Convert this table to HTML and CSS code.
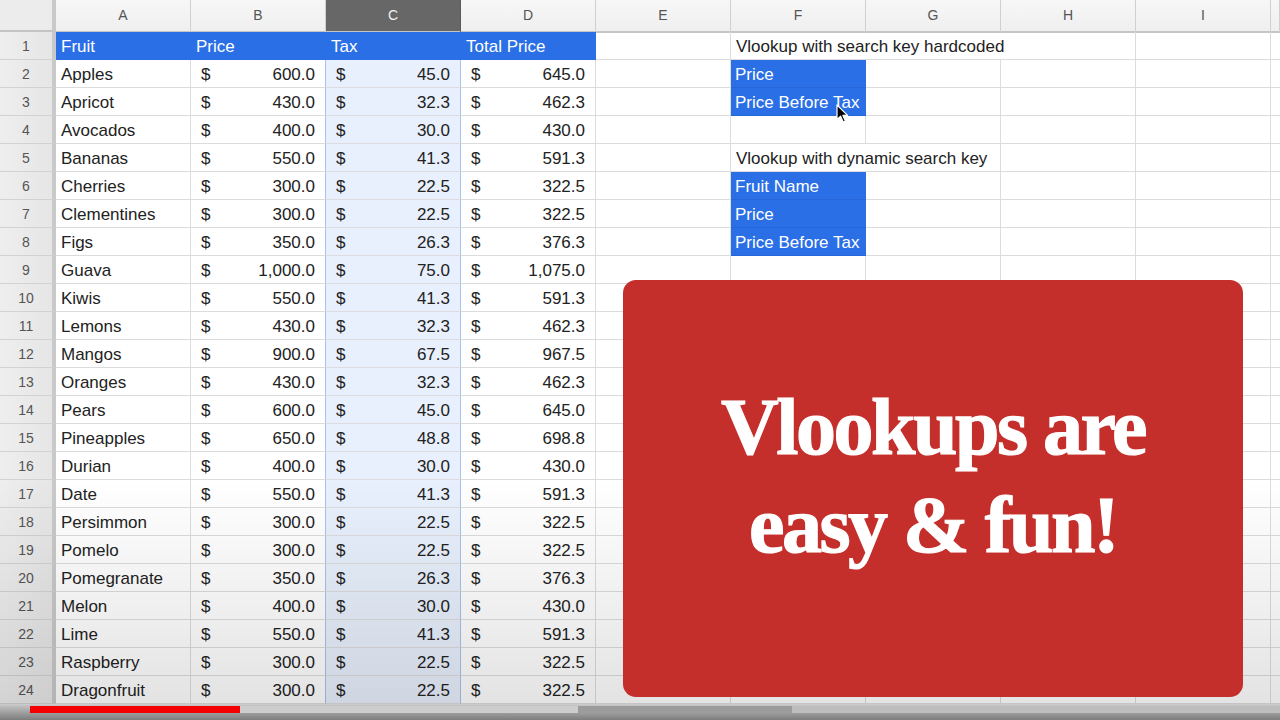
FILE: index.html
```html
<!DOCTYPE html>
<html>
<head>
<meta charset="utf-8">
<link rel="stylesheet" href="styles.css">
</head>
<body>
<div class="screen">
  <div class="sheet">
    <div class="row hdr">
      <div class="corner"></div>
      <div class="ch">A</div><div class="ch">B</div><div class="ch sel">C</div><div class="ch">D</div><div class="ch">E</div><div class="ch">F</div><div class="ch">G</div><div class="ch">H</div><div class="ch">I</div><div class="ch"></div>
    </div>
    <div class="row">
      <div class="rn">1</div>
      <div class="c blue">Fruit</div><div class="c blue">Price</div><div class="c blue">Tax</div><div class="c blue">Total Price</div>
      <div class="c"></div><div class="c span3">Vlookup with search key hardcoded</div><div class="c"></div><div class="c"></div>
    </div>
    <div class="row">
      <div class="rn">2</div><div class="c">Apples</div><div class="c m"><span>$</span><span>600.0</span></div><div class="c m tx"><span>$</span><span>45.0</span></div><div class="c m"><span>$</span><span>645.0</span></div>
      <div class="c"></div><div class="c fb">Price</div><div class="c"></div><div class="c"></div><div class="c"></div><div class="c"></div>
    </div>
    <div class="row">
      <div class="rn">3</div><div class="c">Apricot</div><div class="c m"><span>$</span><span>430.0</span></div><div class="c m tx"><span>$</span><span>32.3</span></div><div class="c m"><span>$</span><span>462.3</span></div>
      <div class="c"></div><div class="c fb">Price Before Tax</div><div class="c"></div><div class="c"></div><div class="c"></div><div class="c"></div>
    </div>
    <div class="row">
      <div class="rn">4</div><div class="c">Avocados</div><div class="c m"><span>$</span><span>400.0</span></div><div class="c m tx"><span>$</span><span>30.0</span></div><div class="c m"><span>$</span><span>430.0</span></div>
      <div class="c"></div><div class="c"></div><div class="c"></div><div class="c"></div><div class="c"></div><div class="c"></div>
    </div>
    <div class="row">
      <div class="rn">5</div><div class="c">Bananas</div><div class="c m"><span>$</span><span>550.0</span></div><div class="c m tx"><span>$</span><span>41.3</span></div><div class="c m"><span>$</span><span>591.3</span></div>
      <div class="c"></div><div class="c span2">Vlookup with dynamic search key</div><div class="c"></div><div class="c"></div><div class="c"></div>
    </div>
    <div class="row">
      <div class="rn">6</div><div class="c">Cherries</div><div class="c m"><span>$</span><span>300.0</span></div><div class="c m tx"><span>$</span><span>22.5</span></div><div class="c m"><span>$</span><span>322.5</span></div>
      <div class="c"></div><div class="c fb">Fruit Name</div><div class="c"></div><div class="c"></div><div class="c"></div><div class="c"></div>
    </div>
    <div class="row">
      <div class="rn">7</div><div class="c">Clementines</div><div class="c m"><span>$</span><span>300.0</span></div><div class="c m tx"><span>$</span><span>22.5</span></div><div class="c m"><span>$</span><span>322.5</span></div>
      <div class="c"></div><div class="c fb">Price</div><div class="c"></div><div class="c"></div><div class="c"></div><div class="c"></div>
    </div>
    <div class="row">
      <div class="rn">8</div><div class="c">Figs</div><div class="c m"><span>$</span><span>350.0</span></div><div class="c m tx"><span>$</span><span>26.3</span></div><div class="c m"><span>$</span><span>376.3</span></div>
      <div class="c"></div><div class="c fb">Price Before Tax</div><div class="c"></div><div class="c"></div><div class="c"></div><div class="c"></div>
    </div>
    <div class="row">
      <div class="rn">9</div><div class="c">Guava</div><div class="c m"><span>$</span><span>1,000.0</span></div><div class="c m tx"><span>$</span><span>75.0</span></div><div class="c m"><span>$</span><span>1,075.0</span></div>
      <div class="c"></div><div class="c"></div><div class="c"></div><div class="c"></div><div class="c"></div><div class="c"></div>
    </div>
    <div class="row">
      <div class="rn">10</div><div class="c">Kiwis</div><div class="c m"><span>$</span><span>550.0</span></div><div class="c m tx"><span>$</span><span>41.3</span></div><div class="c m"><span>$</span><span>591.3</span></div>
      <div class="c"></div><div class="c"></div><div class="c"></div><div class="c"></div><div class="c"></div><div class="c"></div>
    </div>
    <div class="row">
      <div class="rn">11</div><div class="c">Lemons</div><div class="c m"><span>$</span><span>430.0</span></div><div class="c m tx"><span>$</span><span>32.3</span></div><div class="c m"><span>$</span><span>462.3</span></div>
      <div class="c"></div><div class="c"></div><div class="c"></div><div class="c"></div><div class="c"></div><div class="c"></div>
    </div>
    <div class="row">
      <div class="rn">12</div><div class="c">Mangos</div><div class="c m"><span>$</span><span>900.0</span></div><div class="c m tx"><span>$</span><span>67.5</span></div><div class="c m"><span>$</span><span>967.5</span></div>
      <div class="c"></div><div class="c"></div><div class="c"></div><div class="c"></div><div class="c"></div><div class="c"></div>
    </div>
    <div class="row">
      <div class="rn">13</div><div class="c">Oranges</div><div class="c m"><span>$</span><span>430.0</span></div><div class="c m tx"><span>$</span><span>32.3</span></div><div class="c m"><span>$</span><span>462.3</span></div>
      <div class="c"></div><div class="c"></div><div class="c"></div><div class="c"></div><div class="c"></div><div class="c"></div>
    </div>
    <div class="row">
      <div class="rn">14</div><div class="c">Pears</div><div class="c m"><span>$</span><span>600.0</span></div><div class="c m tx"><span>$</span><span>45.0</span></div><div class="c m"><span>$</span><span>645.0</span></div>
      <div class="c"></div><div class="c"></div><div class="c"></div><div class="c"></div><div class="c"></div><div class="c"></div>
    </div>
    <div class="row">
      <div class="rn">15</div><div class="c">Pineapples</div><div class="c m"><span>$</span><span>650.0</span></div><div class="c m tx"><span>$</span><span>48.8</span></div><div class="c m"><span>$</span><span>698.8</span></div>
      <div class="c"></div><div class="c"></div><div class="c"></div><div class="c"></div><div class="c"></div><div class="c"></div>
    </div>
    <div class="row">
      <div class="rn">16</div><div class="c">Durian</div><div class="c m"><span>$</span><span>400.0</span></div><div class="c m tx"><span>$</span><span>30.0</span></div><div class="c m"><span>$</span><span>430.0</span></div>
      <div class="c"></div><div class="c"></div><div class="c"></div><div class="c"></div><div class="c"></div><div class="c"></div>
    </div>
    <div class="row">
      <div class="rn">17</div><div class="c">Date</div><div class="c m"><span>$</span><span>550.0</span></div><div class="c m tx"><span>$</span><span>41.3</span></div><div class="c m"><span>$</span><span>591.3</span></div>
      <div class="c"></div><div class="c"></div><div class="c"></div><div class="c"></div><div class="c"></div><div class="c"></div>
    </div>
    <div class="row">
      <div class="rn">18</div><div class="c">Persimmon</div><div class="c m"><span>$</span><span>300.0</span></div><div class="c m tx"><span>$</span><span>22.5</span></div><div class="c m"><span>$</span><span>322.5</span></div>
      <div class="c"></div><div class="c"></div><div class="c"></div><div class="c"></div><div class="c"></div><div class="c"></div>
    </div>
    <div class="row">
      <div class="rn">19</div><div class="c">Pomelo</div><div class="c m"><span>$</span><span>300.0</span></div><div class="c m tx"><span>$</span><span>22.5</span></div><div class="c m"><span>$</span><span>322.5</span></div>
      <div class="c"></div><div class="c"></div><div class="c"></div><div class="c"></div><div class="c"></div><div class="c"></div>
    </div>
    <div class="row">
      <div class="rn">20</div><div class="c">Pomegranate</div><div class="c m"><span>$</span><span>350.0</span></div><div class="c m tx"><span>$</span><span>26.3</span></div><div class="c m"><span>$</span><span>376.3</span></div>
      <div class="c"></div><div class="c"></div><div class="c"></div><div class="c"></div><div class="c"></div><div class="c"></div>
    </div>
    <div class="row">
      <div class="rn">21</div><div class="c">Melon</div><div class="c m"><span>$</span><span>400.0</span></div><div class="c m tx"><span>$</span><span>30.0</span></div><div class="c m"><span>$</span><span>430.0</span></div>
      <div class="c"></div><div class="c"></div><div class="c"></div><div class="c"></div><div class="c"></div><div class="c"></div>
    </div>
    <div class="row">
      <div class="rn">22</div><div class="c">Lime</div><div class="c m"><span>$</span><span>550.0</span></div><div class="c m tx"><span>$</span><span>41.3</span></div><div class="c m"><span>$</span><span>591.3</span></div>
      <div class="c"></div><div class="c"></div><div class="c"></div><div class="c"></div><div class="c"></div><div class="c"></div>
    </div>
    <div class="row">
      <div class="rn">23</div><div class="c">Raspberry</div><div class="c m"><span>$</span><span>300.0</span></div><div class="c m tx"><span>$</span><span>22.5</span></div><div class="c m"><span>$</span><span>322.5</span></div>
      <div class="c"></div><div class="c"></div><div class="c"></div><div class="c"></div><div class="c"></div><div class="c"></div>
    </div>
    <div class="row">
      <div class="rn">24</div><div class="c">Dragonfruit</div><div class="c m"><span>$</span><span>300.0</span></div><div class="c m tx"><span>$</span><span>22.5</span></div><div class="c m"><span>$</span><span>322.5</span></div>
      <div class="c"></div><div class="c"></div><div class="c"></div><div class="c"></div><div class="c"></div><div class="c"></div>
    </div>
  </div>

  <div class="player">
    <div class="progress">
      <div class="played"></div>
      <div class="buffered"></div>
      <div class="track-dark"></div>
      <div class="track-light"></div>
    </div>
  </div>

  <div class="shade"></div>

  <div class="card">
    <div class="headline">Vlookups are<br>easy &amp; fun!</div>
  </div>

  <svg class="cursor" width="13" height="20" viewBox="0 0 13 20">
    <path d="M1 1 L1 15.5 L4.6 12.2 L7.2 18 L9.4 17 L6.9 11.4 L11.6 11.4 Z" fill="#000" stroke="#fff" stroke-width="1.2" stroke-linejoin="round"/>
  </svg>
</div>
</body>
</html>
```

FILE: styles.css
```css
* { box-sizing: border-box; }

html, body {
  margin: 0;
  padding: 0;
}

body {
  width: 1280px;
  height: 720px;
  overflow: hidden;
  background: #ffffff;
  font-family: "Liberation Sans", Arial, Helvetica, sans-serif;
}

.screen {
  position: relative;
  width: 1280px;
  height: 720px;
  overflow: hidden;
}

.sheet {
  display: flex;
  flex-direction: column;
  height: 704px;
}

.row {
  display: grid;
  grid-template-columns: 56px repeat(9, 135px) 1fr;
  height: 28px;
}

.row.hdr {
  height: 32px;
}

.corner {
  background: #ececec;
  border-right: 4px solid #c9c9c9;
  border-bottom: 3px solid #c4c4c4;
}

.ch {
  background: linear-gradient(#f7f7f7, #efefef);
  border-right: 1px solid #d0d0d0;
  border-bottom: 2px solid #c4c4c4;
  color: #555;
  font-size: 14px;
  line-height: 31px;
  text-align: center;
}

.ch.sel {
  background: #676767;
  color: #f2f2f2;
  border-right-color: #5a5a5a;
}

.rn {
  background: linear-gradient(90deg, #eeeeee, #e6e6e6);
  border-right: 4px solid #c9c9c9;
  border-bottom: 1px solid #d2d2d2;
  color: #555;
  font-size: 14px;
  padding-top: 2px;
  line-height: 25px;
  text-align: center;
}

.c {
  border-right: 1px solid #dcdcdc;
  border-bottom: 1px solid #dcdcdc;
  color: #222;
  font-size: 17px;
  padding: 2px 5px 0;
  line-height: 25px;
  white-space: nowrap;
  overflow: visible;
}

.c.span3 { grid-column: span 3; }
.c.span2 { grid-column: span 2; }

.c.m {
  display: flex;
  justify-content: space-between;
  padding: 2px 10px 0;
}

.c.tx {
  background: #e8f0fd;
  border-left: 1px solid #a9c1ea;
  border-right: 1px solid #a9c1ea;
  margin-left: -1px;
}

.c.blue {
  background: #2a6fe6;
  color: #ffffff;
  border-right-color: #2a6fe6;
  border-bottom-color: #2a6fe6;
}

.c.fb {
  background: #2a6fe6;
  color: #ffffff;
  border-right-color: #2a6fe6;
  border-bottom-color: #2966da;
  padding-left: 4px;
}

.player {
  height: 16px;
  background: linear-gradient(#cfcfcf 0, #c2c2c2 10%, #9a9a9a 60%, #7d7d7d 100%);
  padding-top: 2px;
}

.progress {
  display: flex;
  height: 7px;
}

.played {
  margin-left: 30px;
  width: 210px;
  background: #f40000;
}

.buffered {
  width: 338px;
  background: #cdcdcd;
}

.track-dark {
  width: 214px;
  background: #9c9c9c;
}

.track-light {
  flex: 1;
  background: #bdbdbd;
}

.shade {
  position: absolute;
  left: 0;
  top: 480px;
  width: 1280px;
  height: 224px;
  background: linear-gradient(rgba(0,0,0,0), rgba(0,0,0,0.11));
  pointer-events: none;
}

.card {
  position: absolute;
  left: 623px;
  top: 280px;
  width: 620px;
  height: 417px;
  background: #c42e2b;
  border-radius: 13px;
  display: flex;
  align-items: center;
  justify-content: center;
  padding-bottom: 26px;
}

.headline {
  color: #ffffff;
  font-family: "Liberation Serif", "Times New Roman", serif;
  font-weight: bold;
  font-size: 80px;
  line-height: 98px;
  letter-spacing: -2.5px;
  -webkit-text-stroke: 1.2px #ffffff;
  text-align: center;
}

.cursor {
  position: absolute;
  left: 836px;
  top: 104px;
}
```
